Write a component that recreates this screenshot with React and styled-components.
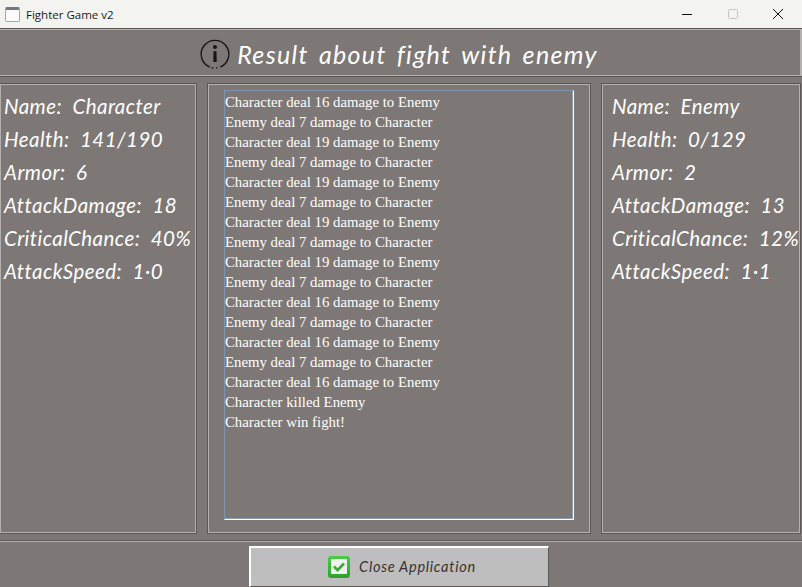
import React from "react";
import styled, { createGlobalStyle } from "styled-components";

const character = ["Name:  Character", "Health:  141/190", "Armor:  6", "AttackDamage:  18", "CriticalChance:  40%", "AttackSpeed:  1·0"];
const enemy = ["Name:  Enemy", "Health:  0/129", "Armor:  2", "AttackDamage:  13", "CriticalChance:  12%", "AttackSpeed:  1·1"];

const fightLog = [
    "Character deal 16 damage to Enemy",
    "Enemy deal 7 damage to Character",
    "Character deal 19 damage to Enemy",
    "Enemy deal 7 damage to Character",
    "Character deal 19 damage to Enemy",
    "Enemy deal 7 damage to Character",
    "Character deal 19 damage to Enemy",
    "Enemy deal 7 damage to Character",
    "Character deal 19 damage to Enemy",
    "Enemy deal 7 damage to Character",
    "Character deal 16 damage to Enemy",
    "Enemy deal 7 damage to Character",
    "Character deal 16 damage to Enemy",
    "Enemy deal 7 damage to Character",
    "Character deal 16 damage to Enemy",
    "Character killed Enemy",
    "Character win fight!",
];

function App() {
    return (
        <Window>
            <GlobalStyle />
            <TitleBar>
                <AppIcon />
                <TitleText>Fighter Game v2</TitleText>
                <WindowButtons>
                    <WindowButton>
                        <svg width="12" height="12" viewBox="0 0 12 12">
                            <path d="M1 6.5h10" stroke="#111" strokeWidth="1" />
                        </svg>
                    </WindowButton>
                    <WindowButton>
                        <svg width="12" height="12" viewBox="0 0 12 12">
                            <rect x="1.5" y="1.5" width="9" height="9" rx="1" fill="none" stroke="#c4c4c4" />
                        </svg>
                    </WindowButton>
                    <WindowButton>
                        <svg width="12" height="12" viewBox="0 0 12 12">
                            <path d="M1 1l10 10M11 1L1 11" stroke="#111" strokeWidth="1" />
                        </svg>
                    </WindowButton>
                </WindowButtons>
            </TitleBar>
            <Header>
                <svg width="32" height="32" viewBox="0 0 30 30">
                    <path d="M10 27.2A13 13 0 1 1 20 27.2" fill="none" stroke="#161616" strokeWidth="1.3" />
                    <path d="M11.8 27.8l1.6.4M16 28.2l1.2-.3" stroke="#161616" strokeWidth="1.1" />
                    <circle cx="15" cy="8.5" r="1.9" fill="#161616" />
                    <path d="M13.6 12.5h2.8l.2 10h-3.2z" fill="#161616" />
                </svg>
                <Heading>Result about fight with enemy</Heading>
            </Header>
            <Panels>
                <StatsPanel $side="left">
                    {character.map((stat) => (
                        <Stat key={stat}>{stat}</Stat>
                    ))}
                </StatsPanel>
                <LogPanel>
                    <LogBox>
                        {fightLog.map((line, i) => (
                            <LogLine key={i}>{line}</LogLine>
                        ))}
                    </LogBox>
                </LogPanel>
                <StatsPanel $side="right">
                    {enemy.map((stat) => (
                        <Stat key={stat}>{stat}</Stat>
                    ))}
                </StatsPanel>
            </Panels>
            <Footer>
                <CloseButton>
                    <svg width="22" height="22" viewBox="0 0 22 22">
                        <defs>
                            <linearGradient id="checkEdge" x1="0" y1="0" x2="0" y2="1">
                                <stop offset="0" stopColor="#4ccb48" />
                                <stop offset="1" stopColor="#2f9f2c" />
                            </linearGradient>
                        </defs>
                        <rect width="22" height="22" rx="3" fill="url(#checkEdge)" />
                        <rect x="3" y="3" width="16" height="15" rx="1" fill="#eff2ef" />
                        <path d="M6 10.5l3.6 3.6 6.4-6.6" fill="none" stroke="#3aa836" strokeWidth="2.6" />
                    </svg>
                    <span>Close Application</span>
                </CloseButton>
            </Footer>
        </Window>
    );
}

// Style :
const GlobalStyle = createGlobalStyle`
    html, body {
        margin: 0;
        padding: 0;
        overflow: hidden;
        background: #7d7876;
    }
`;

const Window = styled.div`
    width: 802px;
    height: 587px;
    display: flex;
    flex-direction: column;
    overflow: hidden;
    background: #7d7876;
    font-family: "Open Sans", sans-serif;
`;

const TitleBar = styled.div`
    height: 28px;
    flex: none;
    display: flex;
    align-items: center;
    padding-left: 5px;
    background: #f3f3ef;
`;

const AppIcon = styled.div`
    width: 15px;
    height: 15px;
    border: 1px solid #a3a8ad;
    border-top: 3px solid #6f7780;
    border-radius: 2px;
    background: #fbfbfb;
    margin-right: 6px;
    box-sizing: border-box;
`;

const TitleText = styled.span`
    font-family: "Open Sans", sans-serif;
    font-size: 11.5px;
    color: #1a1a1a;
`;

const WindowButtons = styled.div`
    margin-left: auto;
    display: flex;
    padding-right: 1px;
`;

const WindowButton = styled.div`
    width: 45.5px;
    height: 28px;
    display: flex;
    align-items: center;
    justify-content: center;
`;

const Header = styled.div`
    box-sizing: border-box;
    height: 49px;
    flex: none;
    display: flex;
    align-items: center;
    justify-content: center;
    gap: 6px;
    padding: 2px 5px 0 0;
    border-top: 1px solid #5b5755;
    border-bottom: 1px solid #5b5755;
    box-shadow: inset 0 1px 0 #b5b1af, inset 0 -1px 0 #b5b1af, inset -2px 0 0 #b5b1af;
`;

const Heading = styled.h1`
    margin: 0;
    font-family: "Lato", sans-serif;
    font-style: italic;
    font-weight: 400;
    font-size: 25px;
    letter-spacing: 1.33px;
    word-spacing: 3px;
    color: #fff;
`;

const Panels = styled.div`
    display: flex;
    justify-content: space-between;
    align-items: stretch;
    height: 451px;
    flex: none;
    margin-top: 6px;
    padding-right: 1px;
`;

const Frame = styled.div`
    box-sizing: border-box;
    border: 1px solid #5b5755;
    box-shadow: inset 1px 1px 0 #b5b1af, inset -1px -1px 0 #b5b1af;
`;

const StatsPanel = styled(Frame)`
    width: ${(props) => (props.$side === "left" ? "197px" : "200px")};
    padding: 6px 0 0 ${(props) => (props.$side === "left" ? "4px" : "10px")};
    ${(props) => props.$side === "left" && "border-left: none;"}
`;

const Stat = styled.div`
    height: 33px;
    line-height: 33px;
    font-family: "Lato", sans-serif;
    font-style: italic;
    font-size: 20.5px;
    letter-spacing: 0.45px;
    white-space: pre;
    color: #fff;
`;

const LogPanel = styled(Frame)`
    width: 384px;
    padding: 6px 16px 12px;
`;

const LogBox = styled.div`
    box-sizing: border-box;
    width: 350px;
    height: 430px;
    border: 1px solid #7f95ad;
    border-right-color: #fff;
    border-bottom-color: #fff;
    box-shadow: inset -1px -1px 0 #8e9eae;
    padding-top: 1px;
`;

const LogLine = styled.div`
    height: 20px;
    line-height: 20px;
    font-family: "Liberation Serif", serif;
    font-size: 14.8px;
    color: #fff;
`;

const Footer = styled.div`
    box-sizing: border-box;
    flex: 1;
    margin-top: 6px;
    display: flex;
    justify-content: center;
    align-items: flex-start;
    padding: 5px 4px 0 0;
    border-top: 1px solid #5b5755;
    box-shadow: inset 0 1px 0 #b5b1af;
`;

const CloseButton = styled.button`
    box-sizing: border-box;
    width: 300px;
    height: 41px;
    display: flex;
    align-items: center;
    justify-content: center;
    gap: 9px;
    padding: 0 0 1px 5px;
    background: #bebebe;
    border-style: solid;
    border-width: 2px 1px 1px 2px;
    border-color: #fff #5b5755 #5b5755 #fff;
    font-family: "Lato", sans-serif;
    font-style: italic;
    font-size: 14.6px;
    letter-spacing: 0.7px;
    color: #3a3230;
    cursor: pointer;
`;

export default App;
